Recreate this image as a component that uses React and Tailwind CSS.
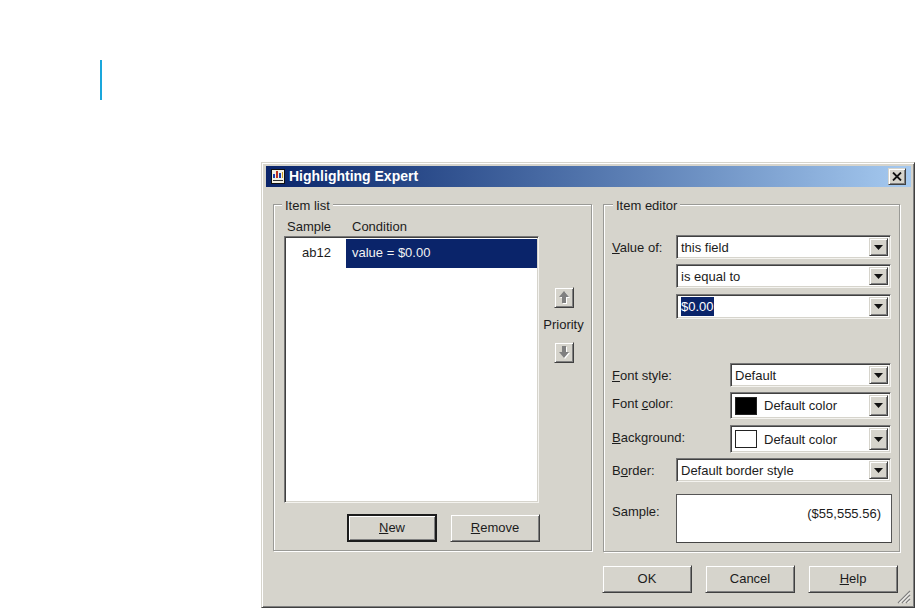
const raised =
  "border border-[#d6d4cc] border-r-[#404040] border-b-[#404040] shadow-[inset_1px_1px_0_#ffffff,inset_-1px_-1px_0_#808080]";
const sunken =
  "border border-[#777777] border-r-[#f4f3ef] border-b-[#f4f3ef] shadow-[inset_1px_1px_0_#404040,inset_-1px_-1px_0_#d6d4cc]";
const etched = "border border-[#9a9a96] shadow-[1px_1px_0_#ffffff,inset_1px_1px_0_#ffffff]";

function ArrowDown() {
  return (
    <svg width="9" height="5" viewBox="0 0 9 5">
      <path d="M0 0h9L4.5 5z" fill="#111111" />
    </svg>
  );
}

function Combo({ width, height = "h-6", selected, swatch, children }) {
  return (
    <div className={`flex ${width} ${height} bg-white p-[2px] ${sunken}`}>
      <div className="flex min-w-0 flex-1 items-center gap-[7px] pl-[2px]">
        {swatch && (
          <span className={`h-[18px] w-[22px] border border-[#222222] ${swatch}`} />
        )}
        <span className={selected ? "bg-[#0a246a] text-white" : "pt-px"}>{children}</span>
      </div>
      <div className={`flex w-[19px] items-center justify-center bg-[#d6d4cc] ${raised}`}>
        <ArrowDown />
      </div>
    </div>
  );
}

function Button({ children, isDefault }) {
  return (
    <button
      className={`flex h-7 w-[90px] items-center justify-center bg-[#d6d4cc] ${
        isDefault
          ? "border-2 border-[#1c1c1c] shadow-[inset_1px_1px_0_#ffffff,inset_-1px_-1px_0_#808080]"
          : raised
      }`}
    >
      {children}
    </button>
  );
}

function MoveButton({ up }) {
  return (
    <div className={`flex h-[21px] w-5 items-center justify-center bg-[#d6d4cc] ${raised}`}>
      <svg width="14" height="15" viewBox="0 0 14 15">
        {up ? (
          <>
            <path d="M8 2l5 6H10v6H6V8H3z" fill="#ffffff" />
            <path d="M7 1l5 6H9v6H5V7H2z" fill="#808080" />
          </>
        ) : (
          <>
            <path d="M6 2h4v6h3l-5 6-5-6h3z" fill="#ffffff" />
            <path d="M5 1h4v6h3l-5 6-5-6h3z" fill="#808080" />
          </>
        )}
      </svg>
    </div>
  );
}

function TitleIcon() {
  return (
    <svg width="14" height="15" viewBox="0 0 14 15">
      <rect x="0.5" y="0.5" width="13" height="14" fill="#f4f1e4" stroke="#111111" />
      <rect x="2" y="5" width="2" height="4" fill="#1c3fb0" />
      <rect x="5" y="2" width="2" height="7" fill="#c03020" />
      <rect x="8" y="4" width="2" height="5" fill="#1c3fb0" />
      <rect x="11" y="3" width="1" height="6" fill="#d0a020" />
      <rect x="2" y="11" width="10" height="1" fill="#333333" />
    </svg>
  );
}

function Label({ children, className = "" }) {
  return <span className={`leading-none ${className}`}>{children}</span>;
}

export default function App() {
  return (
    <div className="h-[608px] w-[915px] overflow-hidden bg-white pl-[100px] pt-[60px] font-['Liberation_Sans',Arial,sans-serif] text-[13px] text-[#1c1c1c]">
      <div className="h-10 w-[2px] bg-[#1aa7dc]" />

      {/* Dialog window */}
      <div className="relative ml-[161px] mt-[62px] h-[446px] w-[654px] border border-[#d6d4cc] border-b-[#404040] border-r-[#404040] bg-[#d6d4cc] p-[3px] pl-[4px] shadow-[inset_1px_1px_0_#ffffff,inset_-1px_-1px_0_#808080]">
        <div className="flex h-[21px] items-center justify-between bg-gradient-to-r from-[#0a246a] to-[#a6caf0] pl-[5px] pr-[5px]">
          <div className="flex items-center gap-[4px]">
            <TitleIcon />
            <span className="text-[14px] font-bold text-white">Highlighting Expert</span>
          </div>
          <div className={`flex h-[17px] w-[18px] items-center justify-center bg-[#d6d4cc] ${raised}`}>
            <svg width="10" height="9" viewBox="0 0 10 9">
              <path d="M1 0.500l8 8M9 0.500l-8 8" stroke="#111111" strokeWidth="1.800" />
            </svg>
          </div>
        </div>

        <div className="mt-[17px] flex gap-[11px] pl-[7px]">
          {/* Item list */}
          <div className={`relative flex h-[347px] w-[319px] flex-col pl-[10px] pt-[12px] ${etched}`}>
            <span className="absolute -top-[7px] left-[8px] bg-[#d6d4cc] px-[3px] leading-4">Item list</span>
            <div className="flex h-[19px] items-center">
              <span className="ml-[3px] w-[65px]">Sample</span>
              <span>Condition</span>
            </div>
            <div className="flex">
              <div className={`h-[267px] w-[255px] bg-white py-[2px] pl-[2px] pr-px ${sunken}`}>
                <div className="flex h-[29px] items-center">
                  <span className="w-[59px] pb-[2px] pl-[15px]">ab12</span>
                  <span className="flex h-full flex-1 items-center bg-[#0a246a] pb-[2px] pl-[6px] text-[#f2f2f2]">value = $0.00</span>
                </div>
              </div>
              <div className="ml-[6px] flex w-[37px] flex-col items-center pt-[51px]">
                <MoveButton up />
                <span className="mb-[9px] mt-[9px] leading-4">Priority</span>
                <MoveButton />
              </div>
            </div>
            <div className="ml-[63px] mt-[11px] flex gap-[13px]">
              <Button isDefault>
                <span><u>N</u>ew</span>
              </Button>
              <Button>
                <span><u>R</u>emove</span>
              </Button>
            </div>
          </div>

          {/* Item editor */}
          <div className={`relative flex h-[348px] w-[297px] flex-col pl-[8px] pt-[30px] ${etched}`}>
            <span className="absolute -top-[7px] left-[9px] bg-[#d6d4cc] px-[3px] leading-4">Item editor</span>
            <div className="flex items-start">
              <Label className="w-[64px] pt-[6px]"><u>V</u>alue of:</Label>
              <div className="flex flex-col">
                <Combo width="w-[215px]">this field</Combo>
                <div className="mt-[5px]"><Combo width="w-[215px]">is equal to</Combo></div>
                <div className="mt-[6px]"><Combo width="w-[215px]" height="h-[25px]" selected>$0.00</Combo></div>
              </div>
            </div>
            <div className="mt-[44px] flex items-center">
              <Label className="w-[118px]"><u>F</u>ont style:</Label>
              <Combo width="w-[161px]">Default</Combo>
            </div>
            <div className="mt-[5px] flex">
              <Label className="w-[118px] pt-[5px]">Font <u>c</u>olor:</Label>
              <Combo width="w-[161px]" height="h-[27px]" swatch="bg-black">Default color</Combo>
            </div>
            <div className="mt-[6px] flex">
              <Label className="w-[118px] pt-[6px]"><u>B</u>ackground:</Label>
              <Combo width="w-[161px]" height="h-[28px]" swatch="bg-white">Default color</Combo>
            </div>
            <div className="mt-[5px] flex items-center">
              <Label className="w-[64px]">B<u>o</u>rder:</Label>
              <Combo width="w-[215px]">Default border style</Combo>
            </div>
            <div className="mt-[12px] flex">
              <Label className="w-[64px] pt-[11px]">Sample:</Label>
              <div className="flex h-[49px] w-[216px] items-start justify-end border border-[#555555] border-b-[#444444] bg-white pr-[10px] pt-[11px] leading-4">
                ($55,555.56)
              </div>
            </div>
          </div>
        </div>

        <div className="ml-[336px] mt-[13px] flex gap-[13px]">
          <Button>OK</Button>
          <Button>Cancel</Button>
          <Button><span><u>H</u>elp</span></Button>
        </div>

        {/* Resize grip */}
        <svg className="absolute bottom-[3px] right-[3px]" width="15" height="15" viewBox="0 0 15 15">
          <path d="M14 2L2 14M14 6L6 14M14 10l-4 4" stroke="#808080" strokeWidth="1.300" />
          <path d="M14 3.500L3.500 14M14 7.500L7.500 14M14 11.500L11.500 14" stroke="#ffffff" />
        </svg>
      </div>
    </div>
  );
}
